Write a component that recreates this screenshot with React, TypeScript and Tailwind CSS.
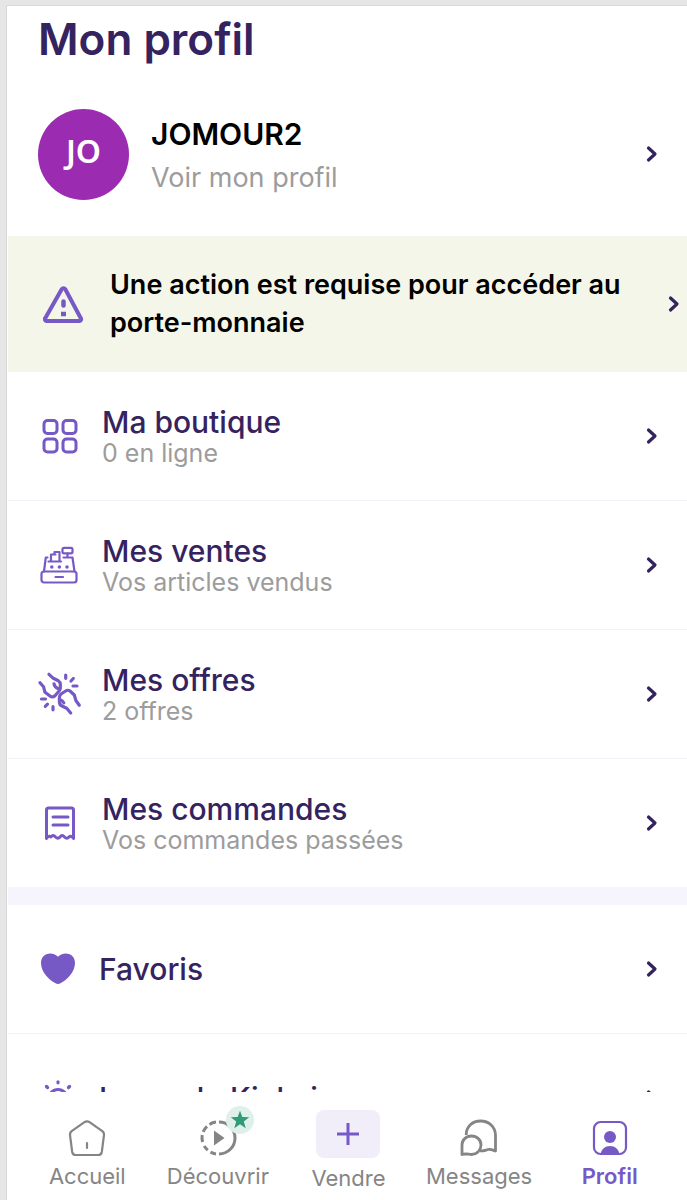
import type { ReactNode } from "react";

type Row = {
    title: string;
    subtitle: string;
    icon: ReactNode;
};

const Chevron = () => (
    <svg
        viewBox="0 0 12 18"
        className="h-[18px] w-3 shrink-0"
        fill="none"
        stroke="#35235f"
        strokeWidth="3.2"
        strokeLinecap="round"
        strokeLinejoin="round"
        aria-hidden="true"
    >
        <path d="M2.500 3L9 9l-6.500 6" />
    </svg>
);

const WarningIcon = () => (
    <svg
        viewBox="1 -3 42 38"
        className="h-[38px] w-[42px] shrink-0"
        fill="none"
        stroke="#7759c6"
        strokeWidth="4"
        strokeLinejoin="round"
        aria-hidden="true"
    >
        <path d="M20.200 1.200a2.200 2.200 0 0 1 3.600 0l15.500 29a1.800 1.800 0 0 1-1.600 2.800H5.300a1.800 1.800 0 0 1-1.600-2.800z" transform="translate(-.5 0)" />
        <path d="M21.500 13.500v4" strokeWidth="4.500" strokeLinecap="round" />
        <path d="M19 26h5" strokeWidth="4.500" />
    </svg>
);

const GridIcon = () => (
    <svg viewBox="0 0 40 40" className="size-10" fill="none" stroke="#7759c6" strokeWidth="3">
        <rect x="4" y="4.500" width="13" height="13" rx="3.500" />
        <rect x="23" y="4.500" width="13" height="13" rx="3.500" />
        <rect x="4" y="23" width="13" height="13" rx="3.500" />
        <rect x="23" y="23" width="13" height="13" rx="3.500" />
    </svg>
);

const RegisterIcon = () => (
    <svg
        viewBox="1 0 40 40"
        className="size-10"
        fill="none"
        stroke="#7759c6"
        strokeWidth="2.200"
        strokeLinejoin="round"
        strokeLinecap="round"
    >
        <rect x="2.500" y="26.500" width="35" height="11" rx="2.500" />
        <path d="M5 26.500L6.800 12.500H8.500M24.500 12.500h9L35.500 26.500" />
        <path d="M9.500 16.500h12.500M12 16.500V9.500h4.500M15.500 9.500V7h5v9.500" />
        <rect x="23.500" y="2.800" width="10" height="5.500" rx="1.500" />
        <path d="M28.500 8.500V12M16.500 32h7.500" />
        <g strokeWidth="3.500">
            <path d="M12.800 22h.01M20.400 22h.01M28 22h.01" />
        </g>
    </svg>
);

const HandsIcon = () => (
    <svg
        viewBox="1 1 44 44"
        className="size-11"
        fill="none"
        stroke="#7759c6"
        strokeWidth="3.200"
        strokeLinejoin="round"
        strokeLinecap="round"
    >
        <path d="M12 3.300l4.300 4 5 2.500q2 1.200 2 3.500v4q0 1.500-1.200 2.700L18 24.700q-2.500 2.300-5 .3L8 21.300l-1.500-5.600-3.500-4" />
        <path d="M17 12.800q.5 3.500 4.500 5" />
        <path d="M42.300 34.300L39 29.700 37.300 24 33 20q-1.500-1.200-3.500-.5l-5.500 3.500q-1.700 1.500-1.700 4.300l.2 4.200q.2 2.500 2.500 3.500l4.700 2.300 4 4.700" />
        <path d="M22.800 28.500q2.500.8 4 3.300" />
        <path d="M28.700 4v3.300M36.300 7.500L34 10M36 15h4M4.500 28h4M10.500 33.200L8.300 35.400M16 35.500v3.300" />
    </svg>
);

const ReceiptIcon = () => (
    <svg
        viewBox="0 0 40 40"
        className="size-10"
        fill="none"
        stroke="#7759c6"
        strokeWidth="3"
        strokeLinejoin="round"
        strokeLinecap="round"
    >
        <path d="M6.500 35.500V7q0-2 2-2h23q2 0 2 2v28.500q-2.500-3.500-4.500-1.500-2 2.500-4.500 0-2.500-3-4.500 0-2 2.500-4.500 0-2.500-3-4.500 0-2.500-2-4.500 1.500z" />
        <path d="M13 14h15M13 22h15" />
    </svg>
);

const HeartIcon = () => (
    <svg viewBox="0 0 36 32" className="h-8 w-9" fill="#7759c6">
        <path d="M18 3.800C15.500 1.200 12.800.5 10.500.5 4.500.5 1 4.500 1 10c0 9 8 17 14.500 20.300q2.500 1.400 5 0C27 27 35 19 35 10c0-5.500-3.500-9.500-9.500-9.500-2.300 0-5 .7-7.500 3.300z" />
    </svg>
);

const SunIcon = () => (
    <svg
        viewBox="0 0 36 36"
        className="size-9"
        fill="none"
        stroke="#7759c6"
        strokeWidth="3.200"
        strokeLinecap="round"
    >
        <circle cx="18" cy="18.500" r="9" />
        <path d="M18 1.800v1M6.500 6.500l1 1M29.500 6.500l-1 1M2 18.500h1M33 18.500h1M7 30l1-1M29 30l-1-1M18 34v1" />
    </svg>
);

const HomeIcon = () => (
    <svg viewBox="0 0 40 40" className="size-10" fill="none" stroke="#858585" strokeWidth="2.200" strokeLinecap="round">
        <path
            strokeLinejoin="round"
            d="M17.500 4.200q2.500-1.800 5 0L35 12.800q2.300 1.600 2 4.200l-2.200 17q-.5 3-3.500 3H8.700q-3 0-3.500-3L3 17q-.3-2.600 2-4.200z"
        />
        <path d="M20 25v5" />
    </svg>
);

const DiscoverIcon = () => (
    <span className="relative">
        <svg viewBox="0 0 40 40" className="size-10" fill="none" stroke="#858585" strokeWidth="3">
            <path d="M21 4a16 16 0 0 1 0 32" />
            <path d="M18 4.100a16 16 0 0 0-6.500 2.300M9 8.400a16 16 0 0 0-3.800 5.500M4.200 17a16 16 0 0 0 .4 7M6.200 28a16 16 0 0 0 3.600 4.200M12.500 34.200A16 16 0 0 0 18 35.900" />
            <path d="M16 12.500l10.500 7.500L16 27.500z" fill="#858585" stroke="none" />
        </svg>
        <span className="absolute -top-3 -right-4 flex size-7 items-center justify-center rounded-full bg-[#dff0ea]">
            <svg viewBox="0 0 20 20" className="size-5" fill="#2f9b78">
                <path d="M10 .8l2.300 6.300 6.900.2-5.400 4.200 1.900 6.700L10 14.300l-5.700 3.900 1.900-6.700L.8 7.300l6.900-.2z" />
            </svg>
        </span>
    </span>
);

const MessagesIcon = () => (
    <svg viewBox="0 0 40 40" className="size-10" fill="none" stroke="#858585" strokeWidth="2.800" strokeLinejoin="round">
        <path d="M7.200 17C7.200 8.500 13.500 3 21.500 3c8.500 0 15 6 15 14.500V33c-2.500-.8-4.500-2.200-7.500-1.500-2.500.6-4.500 1.800-8 1.300" />
        <path d="M12.500 18c5.500 0 9.500 4 9.500 9s-4 9.500-9.500 9.500c-3 0-5-1.300-9.500 0V27c0-5 4-9 9.500-9z" />
    </svg>
);

const ProfileIcon = () => (
    <svg viewBox="0 0 40 40" className="size-10">
        <rect x="4" y="4" width="32" height="32" rx="6.500" fill="none" stroke="#7759c6" strokeWidth="2.200" />
        <circle cx="20" cy="19" r="6" fill="#7759c6" />
        <path d="M10.500 36c1-5 4.500-8 9.500-8s8.500 3 9.500 8z" fill="#7759c6" />
    </svg>
);

const rows: Row[] = [
    { title: "Ma boutique", subtitle: "0 en ligne", icon: <GridIcon /> },
    { title: "Mes ventes", subtitle: "Vos articles vendus", icon: <RegisterIcon /> },
    { title: "Mes offres", subtitle: "2 offres", icon: <HandsIcon /> },
    { title: "Mes commandes", subtitle: "Vos commandes passées", icon: <ReceiptIcon /> },
];

const shortcuts = [
    { title: "Favoris", icon: <HeartIcon /> },
    { title: "Les + de Kinkai", icon: <SunIcon /> },
];

const MenuRow = ({ title, subtitle, icon }: Row) => (
    <li className="border-b border-[#f3f2f8] last:border-b-0">
        <a href="#" className="flex h-32 items-center pr-[29px] pl-[30px]">
            <span className="flex w-11 shrink-0 justify-center">{icon}</span>
            <span className="ml-5 flex grow flex-col pt-0.5">
                <span className="text-[30px] leading-8 font-medium text-[#35235f]">{title}</span>
                <span className="text-[25px] leading-[30px] text-[#9c9c9c]">{subtitle}</span>
            </span>
            <Chevron />
        </a>
    </li>
);

const navItem = "flex flex-1 flex-col items-center text-[22px] leading-8";

export default function App() {
    return (
        <div className="flex h-screen flex-col bg-[#e6e6e6] pt-[5px] pl-1.5 font-['Inter',sans-serif]">
            <div className="flex min-h-0 grow flex-col border-t border-l border-[#d8d8d8] bg-white pl-px">
                <main className="min-h-0 grow overflow-hidden">
                    <h1 className="px-[30px] pt-2 text-[44px] leading-[50px] font-semibold text-[#35235f]">
                        Mon profil
                    </h1>
                    <a href="#" className="flex items-center pt-11 pr-[29px] pb-9 pl-[30px]">
                        <span className="flex size-[91px] shrink-0 items-center justify-center rounded-full bg-[#9b2cb1] pb-1.5 font-['Noto_Sans',sans-serif] text-[32px] font-semibold text-white">
                            JO
                        </span>
                        <span className="ml-[22px] flex grow flex-col pt-1">
                            <span className="text-[30px] leading-[44px] font-semibold text-black">JOMOUR2</span>
                            <span className="text-[27px] leading-[44px] text-[#9c9c9c]">Voir mon profil</span>
                        </span>
                        <Chevron />
                    </a>
                    <a href="#" className="flex min-h-[136px] items-center bg-[#f4f6e9] pr-[7px] pl-[35px]">
                        <WarningIcon />
                        <span className="ml-[25px] grow text-[27px] leading-[38px] font-semibold text-black">
                            Une action est requise pour accéder au{" "}
                            <span className="whitespace-nowrap">porte-monnaie</span>
                        </span>
                        <Chevron />
                    </a>
                    <ul>
                        {rows.map((row) => (
                            <MenuRow key={row.title} {...row} />
                        ))}
                    </ul>
                    <div className="h-[18px] bg-[#f6f5fd]" />
                    <ul>
                        {shortcuts.map(({ title, icon }) => (
                            <li key={title} className="border-b border-[#f3f2f8]">
                                <a href="#" className="flex h-32 items-center pr-[29px] pl-8">
                                    {icon}
                                    <span className="ml-[23px] grow text-[30px] leading-8 font-medium text-[#35235f]">
                                        {title}
                                    </span>
                                    <Chevron />
                                </a>
                            </li>
                        ))}
                    </ul>
                </main>
                <nav className="flex shrink-0 pt-[26px] pr-3 pb-1.5 pl-3.5">
                    <a href="#" className={`${navItem} gap-0.5 text-[#858585]`}>
                        <HomeIcon />
                        Accueil
                    </a>
                    <a href="#" className={`${navItem} gap-0.5 text-[#858585]`}>
                        <DiscoverIcon />
                        Découvrir
                    </a>
                    <a href="#" className={`${navItem} gap-1 text-[#858585]`}>
                        <span className="-mt-2 flex h-12 w-16 items-center justify-center rounded-lg bg-[#f1eefa]">
                            <svg viewBox="0 0 24 24" className="size-6" stroke="#7759c6" strokeWidth="3">
                                <path d="M12 1v22M1 12h22" />
                            </svg>
                        </span>
                        Vendre
                    </a>
                    <a href="#" className={`${navItem} gap-0.5 text-[#858585]`}>
                        <MessagesIcon />
                        Messages
                    </a>
                    <a href="#" aria-current="page" className={`${navItem} gap-0.5 font-semibold text-[#7759c6]`}>
                        <ProfileIcon />
                        Profil
                    </a>
                </nav>
            </div>
        </div>
    );
}
